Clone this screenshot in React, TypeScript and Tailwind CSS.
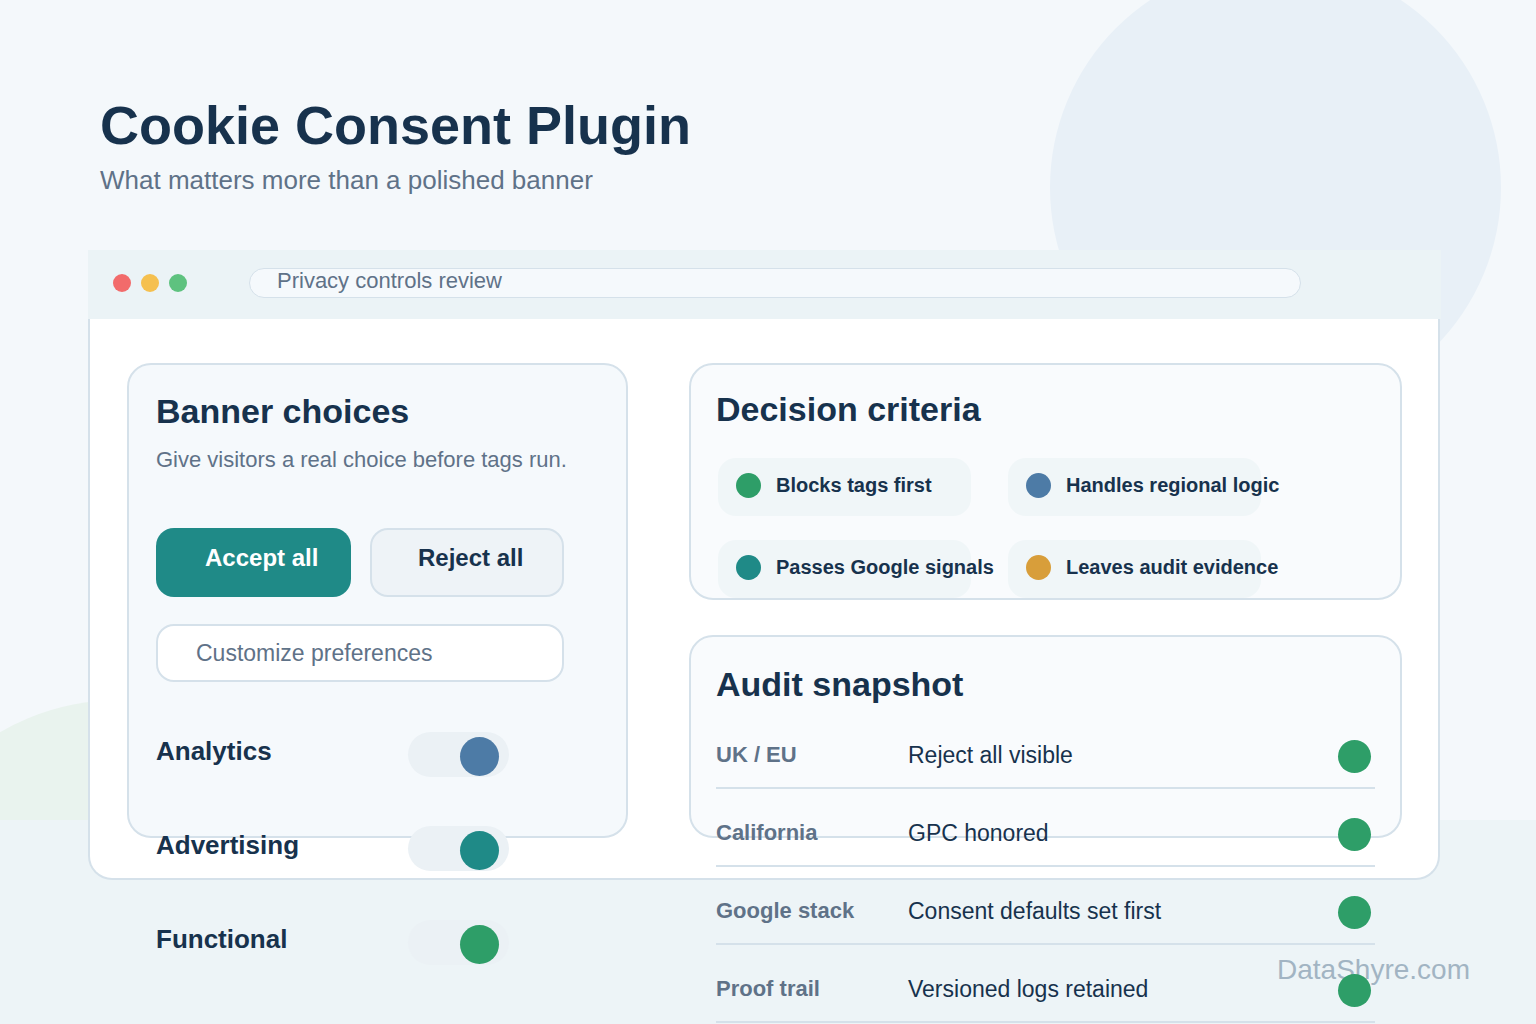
import React from "react"

type Toggle = { label: string; knob: string }
type Chip = { label: string; dot: string }
type AuditRow = { region: string; check: string }

const toggles: Toggle[] = [
  { label: "Analytics", knob: "bg-[#4d7ba6]" },
  { label: "Advertising", knob: "bg-[#1f8a87]" },
  { label: "Functional", knob: "bg-[#2e9e68]" },
]

const criteria: Chip[] = [
  { label: "Blocks tags first", dot: "bg-[#2e9e68]" },
  { label: "Handles regional logic", dot: "bg-[#4d7ba6]" },
  { label: "Passes Google signals", dot: "bg-[#1f8a87]" },
  { label: "Leaves audit evidence", dot: "bg-[#d89e3a]" },
]

const audit: AuditRow[] = [
  { region: "UK / EU", check: "Reject all visible" },
  { region: "California", check: "GPC honored" },
  { region: "Google stack", check: "Consent defaults set first" },
  { region: "Proof trail", check: "Versioned logs retained" },
]

function BannerCard() {
  return (
    <div className="h-[475px] rounded-[24px] border-2 border-[#d5e1ea] bg-[#f5f9fc] px-[27px] pt-[28px]">
      <h2 className="text-[34px] leading-[36px] font-bold text-[#17324d]">Banner choices</h2>
      <p className="mt-[17px] text-[22px] leading-[28px] text-[#5f7288]">Give visitors a real choice before tags run.</p>

      <div className="mt-[54px] flex gap-[19px]">
        <button className="flex h-[69px] w-[195px] items-center rounded-[18px] bg-[#1f8a87] pl-[49px] pb-[10px] text-[24px] leading-[30px] font-bold text-white">
          Accept all
        </button>
        <button className="flex h-[69px] w-[194px] items-center rounded-[18px] border-2 border-[#d5e1ea] bg-[#eef3f7] pl-[46px] pb-[10px] text-[24px] leading-[30px] font-bold text-[#17324d]">
          Reject all
        </button>
      </div>

      <button className="mt-[27px] flex h-[58px] w-[408px] items-center rounded-[18px] border-2 border-[#d5e1ea] bg-white pl-[38px] text-[23px] leading-[28px] text-[#5f7288]">
        Customize preferences
      </button>

      <div className="mt-[50px] flex flex-col gap-[49px]">
        {toggles.map(t => (
          <div key={t.label} className="flex">
            <span className="w-[252px] text-[26px] leading-[38px] font-bold text-[#17324d]">{t.label}</span>
            <span className="flex h-[45px] w-[101px] items-center justify-end rounded-full bg-[#ebf1f5] pt-[3px] pr-[10px]">
              <span className={`h-[39px] w-[39px] rounded-full ${t.knob}`} />
            </span>
          </div>
        ))}
      </div>
    </div>
  )
}

function CriteriaCard() {
  return (
    <div className="h-[237px] rounded-[24px] border-2 border-[#d5e1ea] bg-[#f9fbfd] px-[25px] pt-[24px]">
      <h2 className="text-[34px] leading-[40px] font-bold text-[#17324d]">Decision criteria</h2>
      <div className="mt-[29px] ml-[2px] grid grid-cols-[253px_253px] gap-x-[37px] gap-y-[24px]">
        {criteria.map(c => (
          <div key={c.label} className="flex h-[58px] items-center gap-[15px] rounded-[18px] bg-[#f0f6f8] pl-[18px] pb-[4px]">
            <span className={`h-[25px] w-[25px] shrink-0 rounded-full ${c.dot}`} />
            <span className="whitespace-nowrap text-[20px] leading-[26px] font-bold text-[#17324d]">{c.label}</span>
          </div>
        ))}
      </div>
    </div>
  )
}

function AuditCard() {
  return (
    <div className="h-[203px] rounded-[24px] border-2 border-[#d5e1ea] bg-[#f9fbfd] px-[25px] pt-[27px]">
      <h2 className="text-[34px] leading-[40px] font-bold text-[#17324d]">Audit snapshot</h2>
      <div className="mt-[7px]">
        {audit.map(r => (
          <div key={r.region} className="flex h-[78px] items-center border-b-2 border-[#d5e1ea] pt-[12px]">
            <span className="w-[192px] text-[22px] leading-[28px] font-bold text-[#5f7288]">{r.region}</span>
            <span className="flex-1 text-[23px] leading-[28px] text-[#17324d]">{r.check}</span>
            <span className="mr-[4px] mt-[2px] h-[33px] w-[33px] rounded-full bg-[#2e9e68]" />
          </div>
        ))}
      </div>
    </div>
  )
}

export default function App() {
  return (
    <div className="relative h-[1024px] w-full overflow-hidden bg-[#f4f8fb] font-['Liberation_Sans',Arial,sans-serif]">
      {/* backdrop shapes */}
      <div className="absolute left-[1050px] top-[-38px] h-[451px] w-[451px] rounded-full bg-[#e8f0f7]" />
      <div className="absolute left-[-120px] top-[700px] h-[480px] w-[480px] rounded-full bg-[#e9f3ee]" />
      <div className="absolute left-0 right-0 top-[820px] bottom-0 bg-[#edf4f7]" />
      <div className="absolute left-[1277px] top-[953px] text-[28px] leading-[34px] text-[#a2b4c3]">DataShyre.com</div>

      <div className="relative">
        <div className="pl-[100px] pt-[95px]">
          <h1 className="text-[54px] leading-[60px] font-bold text-[#17324d]">Cookie Consent Plugin</h1>
          <p className="mt-[9px] text-[26px] leading-[32px] text-[#5f7288]">What matters more than a polished banner</p>
        </div>

        <div className="ml-[88px] mt-[54px] w-[1353px]">
          <div className="flex h-[69px] items-center bg-[#ebf3f6] pl-[25px] pb-[3px]">
            <div className="flex gap-[10px]">
              <span className="h-[18px] w-[18px] rounded-full bg-[#f26b6b]" />
              <span className="h-[18px] w-[18px] rounded-full bg-[#f5c04f]" />
              <span className="h-[18px] w-[18px] rounded-full bg-[#5ec27f]" />
            </div>
            <div className="ml-[62px] flex h-[30px] w-[1052px] items-center rounded-full border border-[#d5e1ea] bg-[#f5f9fc] pl-[27px] pb-[4px] text-[22px] leading-[26px] text-[#5f7288]">
              Privacy controls review
            </div>
          </div>

          <div className="h-[561px] w-[1352px] rounded-b-[24px] border-2 border-t-0 border-[#d5e1ea] bg-white pl-[37px] pt-[44px]">
            <div className="grid grid-cols-[501px_713px] gap-x-[61px]">
              <BannerCard />
              <div className="flex flex-col gap-[35px]">
                <CriteriaCard />
                <AuditCard />
              </div>
            </div>
          </div>
        </div>
      </div>
    </div>
  )
}
